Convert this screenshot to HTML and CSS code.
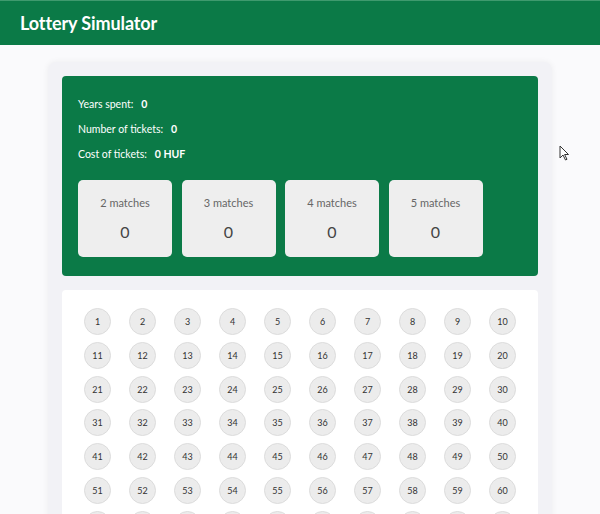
FILE: index.html
```html
<!DOCTYPE html>
<html>
<head>
<meta charset="utf-8">
<link rel="stylesheet" href="styles.css">
</head>
<body>
<header class="topbar"><h1 class="title">Lottery Simulator</h1></header>
<main class="container">
  <section class="stats-panel">
    <div class="stat"><span class="stat-label">Years spent:</span><span class="stat-value">0</span></div>
    <div class="stat"><span class="stat-label">Number of tickets:</span><span class="stat-value">0</span></div>
    <div class="stat"><span class="stat-label">Cost of tickets:</span><span class="stat-value">0 HUF</span></div>
    <div class="matches">
      <div class="match-card"><div class="match-label">2 matches</div><div class="match-value">0</div></div>
      <div class="match-card"><div class="match-label">3 matches</div><div class="match-value">0</div></div>
      <div class="match-card"><div class="match-label">4 matches</div><div class="match-value">0</div></div>
      <div class="match-card"><div class="match-label">5 matches</div><div class="match-value">0</div></div>
    </div>
  </section>
  <section class="numbers-panel">
    <div class="ball-grid">
      <span class="ball">1</span><span class="ball">2</span><span class="ball">3</span><span class="ball">4</span><span class="ball">5</span><span class="ball">6</span><span class="ball">7</span><span class="ball">8</span><span class="ball">9</span><span class="ball">10</span>
      <span class="ball">11</span><span class="ball">12</span><span class="ball">13</span><span class="ball">14</span><span class="ball">15</span><span class="ball">16</span><span class="ball">17</span><span class="ball">18</span><span class="ball">19</span><span class="ball">20</span>
      <span class="ball">21</span><span class="ball">22</span><span class="ball">23</span><span class="ball">24</span><span class="ball">25</span><span class="ball">26</span><span class="ball">27</span><span class="ball">28</span><span class="ball">29</span><span class="ball">30</span>
      <span class="ball">31</span><span class="ball">32</span><span class="ball">33</span><span class="ball">34</span><span class="ball">35</span><span class="ball">36</span><span class="ball">37</span><span class="ball">38</span><span class="ball">39</span><span class="ball">40</span>
      <span class="ball">41</span><span class="ball">42</span><span class="ball">43</span><span class="ball">44</span><span class="ball">45</span><span class="ball">46</span><span class="ball">47</span><span class="ball">48</span><span class="ball">49</span><span class="ball">50</span>
      <span class="ball">51</span><span class="ball">52</span><span class="ball">53</span><span class="ball">54</span><span class="ball">55</span><span class="ball">56</span><span class="ball">57</span><span class="ball">58</span><span class="ball">59</span><span class="ball">60</span>
      <span class="ball">61</span><span class="ball">62</span><span class="ball">63</span><span class="ball">64</span><span class="ball">65</span><span class="ball">66</span><span class="ball">67</span><span class="ball">68</span><span class="ball">69</span><span class="ball">70</span>
      <span class="ball">71</span><span class="ball">72</span><span class="ball">73</span><span class="ball">74</span><span class="ball">75</span><span class="ball">76</span><span class="ball">77</span><span class="ball">78</span><span class="ball">79</span><span class="ball">80</span>
      <span class="ball">81</span><span class="ball">82</span><span class="ball">83</span><span class="ball">84</span><span class="ball">85</span><span class="ball">86</span><span class="ball">87</span><span class="ball">88</span><span class="ball">89</span><span class="ball">90</span>
    </div>
  </section>
</main>
<svg class="cursor" width="12" height="18" viewBox="0 0 12 18"><path d="M1 1 L1 13 L4 10 L6.5 15 L8 14.3 L5.6 9.5 L9.5 9.5 Z" fill="#fff" stroke="#333" stroke-width="1"/></svg>
</body>
</html>
```
FILE: styles.css
```css
* { box-sizing: border-box; }
html, body { margin: 0; padding: 0; }
body {
  background: #fafafc;
  font-family: Lato, "Open Sans", sans-serif;
  height: 514px;
  overflow: hidden;
  position: relative;
}
.topbar {
  height: 45px;
  background: #0b7a47;
  border-top: 1px solid #3f9a6e;
  display: flex;
  align-items: center;
  padding-left: 20px;
}
.title {
  margin: 0;
  color: #fff;
  font-size: 18px;
  font-weight: 700;
  letter-spacing: -0.1px;
}
.container {
  width: 504px;
  margin: 17px auto 0 48px;
  background: #f2f2f6;
  border-radius: 8px;
  padding: 14px;
  box-shadow: 0 0 6px rgba(0,0,0,0.06);
}
.stats-panel {
  background: #0b7a47;
  border-radius: 4px;
  padding: 20px 16px 19px;
  color: #fff;
}
.stat {
  font-size: 10.5px;
  height: 25px;
  line-height: 16px;
  display: flex;
}
.stat-label { margin-right: 8px; }
.stat-value { font-weight: 700; }
.matches {
  display: flex;
  gap: 9.5px;
  margin-top: 9px;
}
.match-card {
  width: 94px;
  height: 77px;
  background: #eeeeee;
  border-radius: 5px;
  display: flex;
  flex-direction: column;
  align-items: center;
  padding-top: 16px;
}
.match-label {
  font-size: 11px;
  color: #666;
  line-height: 14px;
}
.match-value {
  font-size: 16px;
  color: #444;
  margin-top: 12px;
  line-height: 20px;
}
.numbers-panel {
  margin-top: 14px;
  background: #fff;
  border-radius: 4px;
  padding: 18px 22px;
}
.ball-grid {
  display: grid;
  grid-template-columns: repeat(10, 27px);
  justify-content: space-between;
  row-gap: 6.8px;
}
.ball {
  width: 27px;
  height: 27px;
  border-radius: 50%;
  background: #ececec;
  border: 1px solid #dcdcdc;
  display: flex;
  align-items: center;
  justify-content: center;
  font-size: 9px;
  color: #333;
}
.cursor {
  position: absolute;
  left: 559px;
  top: 145px;
}
```
